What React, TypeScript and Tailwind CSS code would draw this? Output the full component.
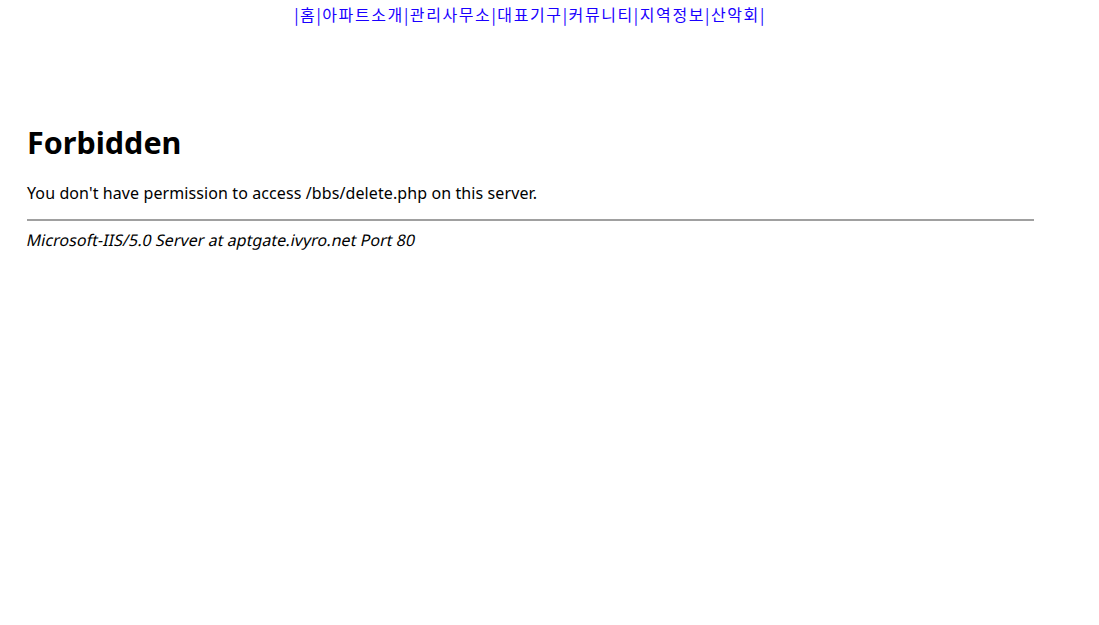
import React from "react";

const menus = ["홈", "아파트소개", "관리사무소", "대표기구", "커뮤니티", "지역정보", "산악회"];

function TopMenu() {
  return (
    <div className="flex justify-center pr-[39px] pt-[3px] text-[16px] leading-[22px] tracking-[1.6px] text-[#1a00ff] font-['Noto_Sans_CJK_KR',sans-serif]">
      <span>|</span>
      {menus.map((m, i) => (
        <React.Fragment key={i}>
          <a href="#" className="text-[#1a00ff]">{m}</a>
          <span>|</span>
        </React.Fragment>
      ))}
    </div>
  );
}

export default function App() {
  return (
    <div className="min-h-[625px] bg-white text-black font-['Noto_Sans','Noto_Sans_CJK_KR',sans-serif]">
      <TopMenu />
      <div className="pl-[27px] pt-[97px] w-[1034px]">
        <h1 className="text-[30.5px] font-bold leading-[40px]">Forbidden</h1>
        <p className="mt-[20px] text-[16px] leading-[22px] tracking-[0.1px]">
          You don't have permission to access /bbs/delete.php on this server.
        </p>
        <hr className="mt-[15px] border-0 border-t-2 border-t-[#a0a0a0]" />
        <address className="mt-[8px] text-[16px] leading-[22px] not-italic">
          <span className="inline-block -skew-x-12 tracking-[0.05px]">
            Microsoft-IIS/5.0 Server at aptgate.ivyro.net Port 80
          </span>
        </address>
      </div>
    </div>
  );
}
